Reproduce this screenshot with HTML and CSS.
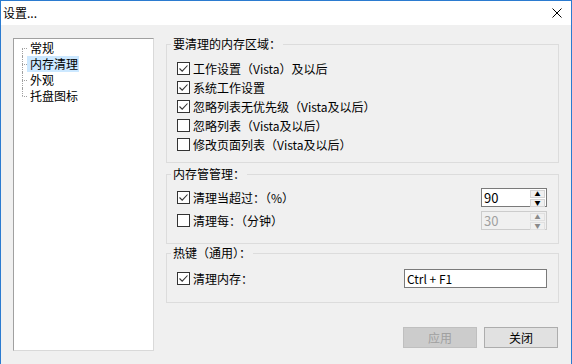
FILE: index.html
```html
<!DOCTYPE html>
<html lang="zh-CN">
<head>
    <meta charset="UTF-8">
    <title>设置...</title>
    <link rel="stylesheet" href="styles.css">
</head>
<body>
    <div class="window">
        <div class="titlebar">
            <span class="title">设置...</span>
            <svg class="close" width="10" height="10" viewBox="0 0 10 10">
                <path d="M0.5 0.5 L9.5 9.5 M9.5 0.5 L0.5 9.5" stroke="#000" stroke-width="1"/>
            </svg>
        </div>

        <div class="content">
            <ul class="tree">
                <li class="first"><span class="branch"><i class="up"></i><i class="down"></i></span><span class="label">常规</span></li>
                <li><span class="branch"><i class="up"></i><i class="down"></i></span><span class="label selected">内存清理</span></li>
                <li><span class="branch"><i class="up"></i><i class="down"></i></span><span class="label">外观</span></li>
                <li class="last"><span class="branch"><i class="up"></i><i class="down"></i></span><span class="label">托盘图标</span></li>
            </ul>

            <div class="panel">
                <fieldset class="group group-areas">
                    <legend>要清理的内存区域：</legend>
                    <div class="row"><span class="check on"><svg width="11" height="11" viewBox="0 0 11 11"><path d="M1.5 5.5 L4.2 8.2 L9.5 2.5" fill="none" stroke="#333" stroke-width="1.1"/></svg></span>工作设置（Vista）及以后</div>
                    <div class="row"><span class="check on"><svg width="11" height="11" viewBox="0 0 11 11"><path d="M1.5 5.5 L4.2 8.2 L9.5 2.5" fill="none" stroke="#333" stroke-width="1.1"/></svg></span>系统工作设置</div>
                    <div class="row"><span class="check on"><svg width="11" height="11" viewBox="0 0 11 11"><path d="M1.5 5.5 L4.2 8.2 L9.5 2.5" fill="none" stroke="#333" stroke-width="1.1"/></svg></span>忽略列表无优先级（Vista及以后）</div>
                    <div class="row"><span class="check"></span>忽略列表（Vista及以后）</div>
                    <div class="row"><span class="check"></span>修改页面列表（Vista及以后）</div>
                </fieldset>

                <fieldset class="group group-manage">
                    <legend>内存管管理：</legend>
                    <div class="row field-row">
                        <span class="check on"><svg width="11" height="11" viewBox="0 0 11 11"><path d="M1.5 5.5 L4.2 8.2 L9.5 2.5" fill="none" stroke="#333" stroke-width="1.1"/></svg></span>
                        <span class="grow">清理当超过：（%）</span>
                        <div class="spin">
                            <span class="spin-value">90</span>
                            <span class="spin-buttons">
                                <span class="spin-btn">&#9650;</span>
                                <span class="spin-btn">&#9660;</span>
                            </span>
                        </div>
                    </div>
                    <div class="row field-row">
                        <span class="check"></span>
                        <span class="grow">清理每：（分钟）</span>
                        <div class="spin disabled">
                            <span class="spin-value">30</span>
                            <span class="spin-buttons">
                                <span class="spin-btn">&#9650;</span>
                                <span class="spin-btn">&#9660;</span>
                            </span>
                        </div>
                    </div>
                </fieldset>

                <fieldset class="group group-hotkey">
                    <legend>热键（通用）：</legend>
                    <div class="row field-row">
                        <span class="check on"><svg width="11" height="11" viewBox="0 0 11 11"><path d="M1.5 5.5 L4.2 8.2 L9.5 2.5" fill="none" stroke="#333" stroke-width="1.1"/></svg></span>
                        <span class="grow">清理内存：</span>
                        <div class="textbox">Ctrl + F1</div>
                    </div>
                </fieldset>

                <div class="buttons">
                    <button class="btn" disabled>应用</button>
                    <button class="btn">关闭</button>
                </div>
            </div>
        </div>
    </div>
</body>
</html>
```

FILE: styles.css
```css
* {
    box-sizing: border-box;
    margin: 0;
    padding: 0;
}

body {
    font-family: "Noto Sans CJK SC", "Noto Sans", sans-serif;
    font-size: 12px;
    color: #000;
    background: #fff;
}

.window {
    width: 572px;
    height: 364px;
    background: #f0f0f0;
    border: 1px solid #2b7bd0;
    border-bottom: none;
    display: flex;
    flex-direction: column;
}

.titlebar {
    height: 24px;
    background: #fff;
    display: flex;
    align-items: center;
    justify-content: space-between;
    padding: 0 9px 1px 2px;
}

.title {
    font-size: 12px;
    line-height: 16px;
}

.content {
    display: flex;
    gap: 12px;
    padding: 13px 0 0 12px;
}

/* tree */
.tree {
    list-style: none;
    width: 141px;
    height: 313px;
    background: #fff;
    border: 1px solid #a0a0a0;
    border-right-color: #d9d9d9;
    border-bottom-color: #d9d9d9;
    padding: 1px 0 0 8px;
}

.tree li {
    display: flex;
    align-items: center;
    height: 16px;
}

.branch {
    display: flex;
    flex-direction: column;
    width: 5px;
    height: 16px;
}

.branch i {
    display: block;
    height: 8px;
    border-left: 1px dotted #a0a0a0;
}

.branch .down {
    border-top: 1px dotted #a0a0a0;
}

.tree .first .up {
    border-left-color: transparent;
}

.tree .last .down {
    border-left-color: transparent;
}

.label {
    line-height: 16px;
    padding: 0 1px 0 3px;
}

.label.selected {
    background: #cce8ff;
}

/* right side */
.panel {
    width: 393px;
    display: flex;
    flex-direction: column;
}

.group {
    border: 1px solid #dcdcdc;
    padding: 0 11px 0 10px;
}

.group legend {
    line-height: 12px;
    padding: 0 2px;
    margin-left: -6px;
}

.group-areas {
    padding-top: 9px;
    padding-bottom: 8px;
}

.group-manage {
    margin-top: 5px;
    padding-top: 8px;
    padding-bottom: 13px;
}

.group-manage .row + .row {
    margin-top: 4px;
}

.group-hotkey {
    margin-top: 3px;
    padding-top: 10px;
    padding-bottom: 14px;
}

.row {
    display: flex;
    align-items: center;
    height: 19px;
    line-height: 19px;
    white-space: nowrap;
}

.check {
    width: 13px;
    height: 13px;
    background: #fff;
    border: 1px solid #333;
    margin-right: 3px;
    display: flex;
    align-items: center;
    justify-content: center;
    flex-shrink: 0;
}

.grow {
    flex: 1;
}

.spin {
    width: 66px;
    height: 19px;
    background: #fff;
    border: 1px solid #7a7a7a;
    display: flex;
}

.spin-value {
    flex: 1;
    font-size: 13px;
    line-height: 17px;
    padding-left: 2px;
}

.spin-buttons {
    width: 17px;
    display: flex;
    flex-direction: column;
    padding: 1px;
    gap: 1px;
}

.spin-btn {
    flex: 1;
    background: #f0f0f0;
    border: 1px solid #d4d4d4;
    font-size: 6px;
    line-height: 6px;
    text-align: center;
    color: #000;
}

.spin.disabled {
    background: #f0f0f0;
    border-color: #cccccc;
}

.spin.disabled .spin-value {
    color: #a0a0a0;
}

.spin.disabled .spin-btn {
    color: #8a8a8a;
    border-color: #e0e0e0;
}

.textbox {
    width: 143px;
    height: 19px;
    background: #fff;
    border: 1px solid #7a7a7a;
    font-size: 12px;
    line-height: 17px;
    padding-left: 2px;
}

.buttons {
    display: flex;
    justify-content: flex-end;
    gap: 7px;
    margin-top: 24px;
    padding-right: 1px;
}

.btn {
    width: 74px;
    height: 21px;
    font-family: inherit;
    font-size: 12px;
    background: #e1e1e1;
    border: 1px solid #adadad;
    color: #000;
}

.btn:disabled {
    background: #cccccc;
    border-color: #bfbfbf;
    color: #a0a0a0;
}
```
